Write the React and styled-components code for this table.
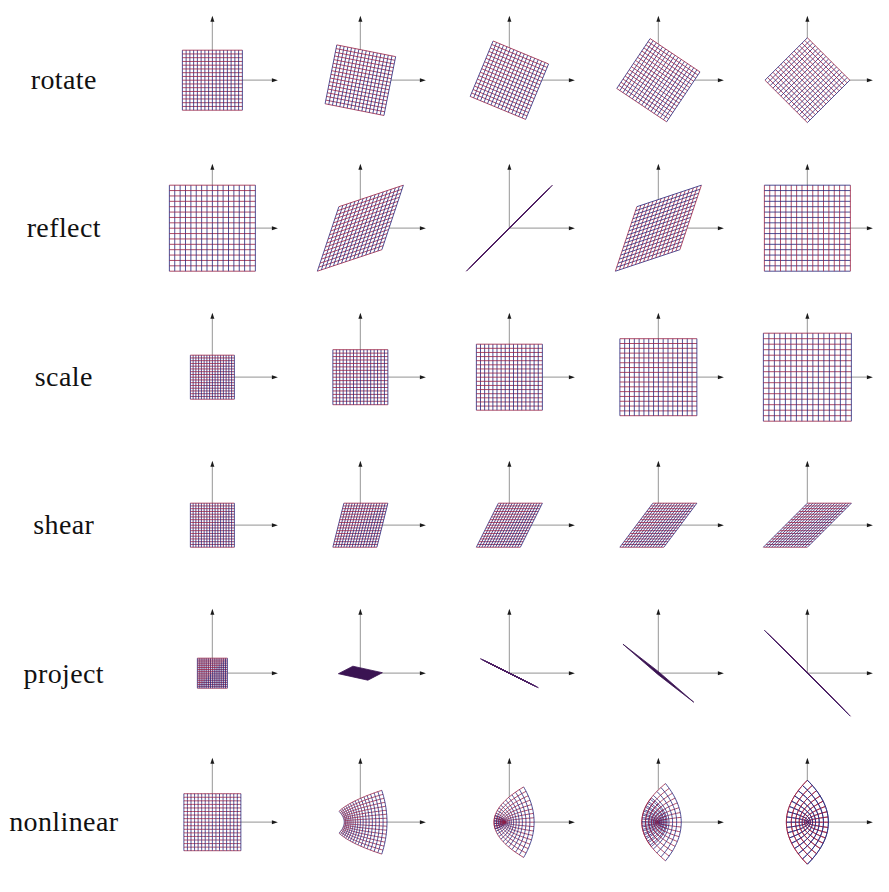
import styled, { createGlobalStyle } from "styled-components";

const GlobalStyle = createGlobalStyle`
  html, body {
    margin: 0;
    padding: 0;
    background: #ffffff;
    overflow: hidden;
  }
`;

const DIVISIONS = 16;
const CELL_W = 148.75;
const CELL_H = 148.4;
const steps = [0, 0.25, 0.5, 0.75, 1];

// (u, v) in [-1, 1] -> [x, y] in pixels, y pointing up
const linear = (a, b) => (u, v) => [u * a[0] + v * b[0], u * a[1] + v * b[1]];

const rotate = (t) => {
  const th = (-t * 45 * Math.PI) / 180;
  const s = 30;
  return linear([s * Math.cos(th), s * Math.sin(th)], [-s * Math.sin(th), s * Math.cos(th)]);
};

const reflect = (t) => linear([43 * (1 - t), 43 * t], [43 * t, 43 * (1 - t)]);

const scale = (t) => {
  const s = 22 * (1 + t);
  return linear([s, 0], [0, s]);
};

const shear = (t) => linear([22, 0], [22 * t, 22]);

const projections = [
  linear([15, 0], [0, 15]),
  linear([7.25, 3.75], [14.75, -3.25]),
  linear([14.5, -7.25], [14.5, -7.25]),
  linear([18.1, -14.0], [17.3, -15.0]),
  linear([21.5, -21.5], [21.5, -21.5]),
];

const nonlinear = (t) => (u, v) => [
  (1 - t) * 28.5 * u + t * 21 * (u * u - v * v),
  (1 - t) * 28.5 * v + t * 21 * (2 * u * v),
];

const rows = [
  { label: "rotate", maps: steps.map(rotate), curved: false },
  { label: "reflect", maps: steps.map(reflect), curved: false },
  { label: "scale", maps: steps.map(scale), curved: false },
  { label: "shear", maps: steps.map(shear), curved: false },
  { label: "project", maps: projections, curved: false },
  { label: "nonlinear", maps: steps.map(nonlinear), curved: true },
];

function toPath(points) {
  return points
    .map(([x, y], i) => `${i === 0 ? "M" : "L"}${x.toFixed(2)} ${(-y).toFixed(2)}`)
    .join(" ");
}

function sampleLine(f, fixed, horizontal, samples) {
  const pts = [];
  for (let i = 0; i <= samples; i++) {
    const p = -1 + (2 * i) / samples;
    pts.push(horizontal ? f(p, fixed) : f(fixed, p));
  }
  return pts;
}

function outline(f, samples) {
  const pts = [];
  for (let i = 0; i <= samples; i++) pts.push(f(-1 + (2 * i) / samples, -1));
  for (let i = 0; i <= samples; i++) pts.push(f(1, -1 + (2 * i) / samples));
  for (let i = 0; i <= samples; i++) pts.push(f(1 - (2 * i) / samples, 1));
  for (let i = 0; i <= samples; i++) pts.push(f(-1, 1 - (2 * i) / samples));
  return toPath(pts) + " Z";
}

// squashed shapes read as solid ink: grid spacing below ~1px
function isDense(f) {
  const [ax, ay] = f(1, 0);
  const [bx, by] = f(0, 1);
  const area = Math.abs(ax * by - ay * bx) * 4;
  return area > 0 && area < 400;
}

export default function App() {
  return (
    <Page>
      <GlobalStyle />
      {rows.map((row) => (
        <Row key={row.label}>
          <Label>{row.label}</Label>
          {row.maps.map((f, i) => (
            <Plot key={i} map={f} curved={row.curved} />
          ))}
        </Row>
      ))}
    </Page>
  );
}

function Plot({ map, curved }) {
  const samples = curved ? 40 : 1;
  const dense = !curved && isDense(map);
  const lines = [];
  for (let k = 0; k <= DIVISIONS; k++) {
    const c = -1 + (2 * k) / DIVISIONS;
    lines.push({ key: `h${k}`, tone: "red", d: toPath(sampleLine(map, c, true, samples)) });
    lines.push({ key: `v${k}`, tone: "blue", d: toPath(sampleLine(map, c, false, samples)) });
  }

  return (
    <Cell viewBox={`${-CELL_W / 2} ${-CELL_H / 2} ${CELL_W} ${CELL_H}`}>
      <Axis d="M0 0 L0 -59" />
      <Axis d="M0 0 L60 0" />
      <ArrowHead points="0,-64.5 -2,-58.5 2,-58.5" />
      <ArrowHead points="65.5,0 59.5,-2 59.5,2" />
      <Backdrop d={outline(map, samples)} />
      {dense ? (
        <InkFill d={outline(map, samples)} />
      ) : (
        lines.map((l) => <GridLine key={l.key} $tone={l.tone} d={l.d} />)
      )}
    </Cell>
  );
}

// Styled Components
const Page = styled.div`
  display: flex;
  flex-direction: column;
  padding-top: 5.8px;
  width: 889px;
`;

const Row = styled.div`
  display: grid;
  grid-template-columns: 137.6px repeat(5, ${CELL_W}px);
  height: ${CELL_H}px;
`;

const Label = styled.div`
  display: flex;
  align-items: center;
  justify-content: center;
  padding-right: 10px;
  font-family: "Liberation Serif", "Times New Roman", serif;
  font-size: 28px;
  letter-spacing: 0.4px;
  color: #111111;
`;

const Cell = styled.svg`
  display: block;
  width: ${CELL_W}px;
  height: ${CELL_H}px;
  overflow: visible;
`;

const Axis = styled.path`
  fill: none;
  stroke: #a8a8a8;
  stroke-width: 1.2;
`;

const ArrowHead = styled.polygon`
  fill: #1a1a1a;
`;

const Backdrop = styled.path`
  fill: #ffffff;
  stroke: none;
`;

const InkFill = styled.path`
  fill: #3a1352;
  stroke: #3a1352;
  stroke-width: 0.8;
  stroke-linejoin: round;
`;

const GridLine = styled.path`
  fill: none;
  stroke: ${({ $tone }) => ($tone === "red" ? "#9a1f42" : "#24247a")};
  stroke-width: 0.95;
  stroke-opacity: 0.85;
  stroke-linejoin: round;
`;
